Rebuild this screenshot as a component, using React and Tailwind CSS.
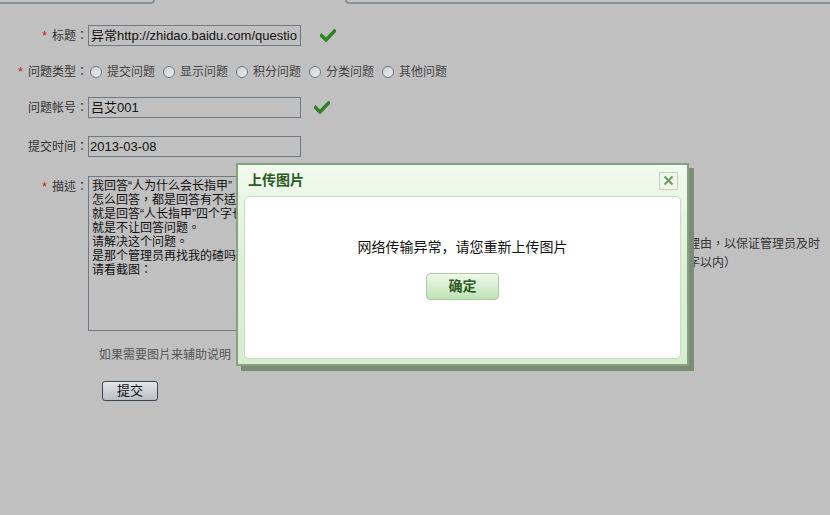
import React from 'react'

const font = { fontFamily: '"Liberation Sans", "Noto Sans CJK SC", sans-serif' }
const tc = { fontFamily: '"Liberation Sans", "Noto Sans CJK TC", sans-serif' }

const descLines = [
  '我回答“人为什么会长指甲”',
  '怎么回答，都是回答有不适当内容，',
  '就是回答“人长指甲”四个字也不行，',
  '就是不让回答问题。',
  '请解决这个问题。',
  '是那个管理员再找我的碴吗？',
  '请看截图：',
]

function Check() {
  return (
    <svg width="16" height="13" viewBox="0 0 16 13">
      <path d="M1.5 6.5 L6 11 L14.5 2" fill="none" stroke="#2c8420" strokeWidth="3.4" strokeLinecap="square" />
    </svg>
  )
}

function Radio({ label }) {
  return (
    <div className="flex items-center gap-[5px] mr-[8px]">
      <span className="w-[12px] h-[12px] rounded-full border border-[#6d7782] bg-gradient-to-br from-[#d0d0d0] to-[#eeeeee]" />
      <span className="text-[12px] text-[#444]">{label}</span>
    </div>
  )
}

function Label({ required, children }) {
  return (
    <div className="w-[88px] shrink-0 text-right text-[12px] text-[#333] leading-[16px]" style={tc}>
      {required && <span className="text-[#cc1010] mr-[5px]">*</span>}
      {children}
    </div>
  )
}

export default function App() {
  return (
    <div className="relative w-[830px] h-[515px] bg-[#c0c0c0] overflow-hidden" style={font}>
      <div className="flex h-[4px]">
        <div className="w-[155px] h-[4px] border-b-2 border-r-2 border-[#89919a] rounded-br-[6px] bg-[#c3c3c3]" />
        <div className="w-[190px]" />
        <div className="flex-1 h-[4px] border-b-2 border-l-2 border-[#89919a] rounded-bl-[6px] bg-[#c3c3c3]" />
      </div>

      <div className="flex items-center mt-[21px] h-[21px]">
        <Label required>标题：</Label>
        <div className="w-[213px] h-[21px] border border-[#6e7984] px-[2px] text-[13px] leading-[19px] text-[#111] overflow-hidden whitespace-nowrap">
          异常http://zhidao.baidu.com/questio
        </div>
        <div className="ml-[19px]"><Check /></div>
      </div>

      <div className="flex items-center mt-[18px] h-[16px]">
        <Label required>问题类型：</Label>
        <div className="flex items-center ml-[2px]">
          <Radio label="提交问题" />
          <Radio label="显示问题" />
          <Radio label="积分问题" />
          <Radio label="分类问题" />
          <Radio label="其他问题" />
        </div>
      </div>

      <div className="flex items-center mt-[17px] h-[21px]">
        <Label>问题帐号：</Label>
        <div className="w-[213px] h-[21px] border border-[#6e7984] px-[2px] text-[13px] leading-[19px] text-[#111]">
          吕艾001
        </div>
        <div className="ml-[13px]"><Check /></div>
      </div>

      <div className="flex items-center mt-[18px] h-[21px]">
        <Label>提交时间：</Label>
        <div className="w-[213px] h-[21px] border border-[#6e7984] px-[1px] text-[13px] leading-[19px] text-[#111]">
          2013-03-08
        </div>
      </div>

      <div className="flex items-start mt-[19px]">
        <div className="pt-[3px]"><Label required>描述：</Label></div>
        <div className="w-[360px] h-[155px] border border-[#6e7984] px-[3px] pt-[2px] text-[12px] leading-[14px] text-[#111] whitespace-nowrap" style={tc}>
          {descLines.map((l) => (
            <div key={l}><span>{l}</span></div>
          ))}
        </div>
        <div className="ml-[168px] mt-[59px] text-[12px] leading-[19px] text-[#333] whitespace-nowrap" style={tc}>
          <div>请写明修改的理由，以保证管理员及时</div>
          <div>处理（限二百字以内）</div>
        </div>
      </div>

      <div className="ml-[99px] mt-[16px] text-[12px] leading-[16px] text-[#555]" style={tc}>
        如果需要图片来辅助说明，请在这里上传图片
      </div>

      <button className="ml-[102px] mt-[18px] w-[56px] h-[20px] rounded-[3px] border border-[#3d4650] bg-gradient-to-b from-[#e4e7ea] to-[#b9bfc5] text-[13px] leading-[18px] text-[#111]">
        提交
      </button>

      <div className="absolute left-[236px] top-[163px] w-[453px] h-[203px] border-2 border-[#86a081] bg-gradient-to-b from-[#f1faee] via-[#dcf0d6] to-[#d6edd0] shadow-[5px_5px_0_#7b8d76] flex flex-col">
        <div className="h-[31px] flex items-center justify-between pl-[10px] pr-[9px]">
          <span className="text-[14px] font-bold text-[#2e5a27]">上传图片</span>
          <span className="w-[19px] h-[18px] border border-[#c2d6bd] bg-[#eef7ea] flex items-center justify-center">
            <svg width="11" height="11" viewBox="0 0 11 11">
              <path d="M1.5 1.5 L9.5 9.5 M9.5 1.5 L1.5 9.5" stroke="#6b9a62" strokeWidth="2" />
            </svg>
          </span>
        </div>
        <div className="mx-[6px] h-[163px] bg-white border border-[#c6dec0] rounded-[5px] flex flex-col items-center">
          <div className="mt-[40px] text-[14px] leading-[20px] text-[#111]">网络传输异常，请您重新上传图片</div>
          <button className="mt-[16px] w-[73px] h-[27px] rounded-[4px] border border-[#a9cc9f] bg-gradient-to-b from-[#eef9ea] to-[#bfe2b5] text-[14px] font-bold text-[#2e5a27]">
            确定
          </button>
        </div>
      </div>
    </div>
  )
}
